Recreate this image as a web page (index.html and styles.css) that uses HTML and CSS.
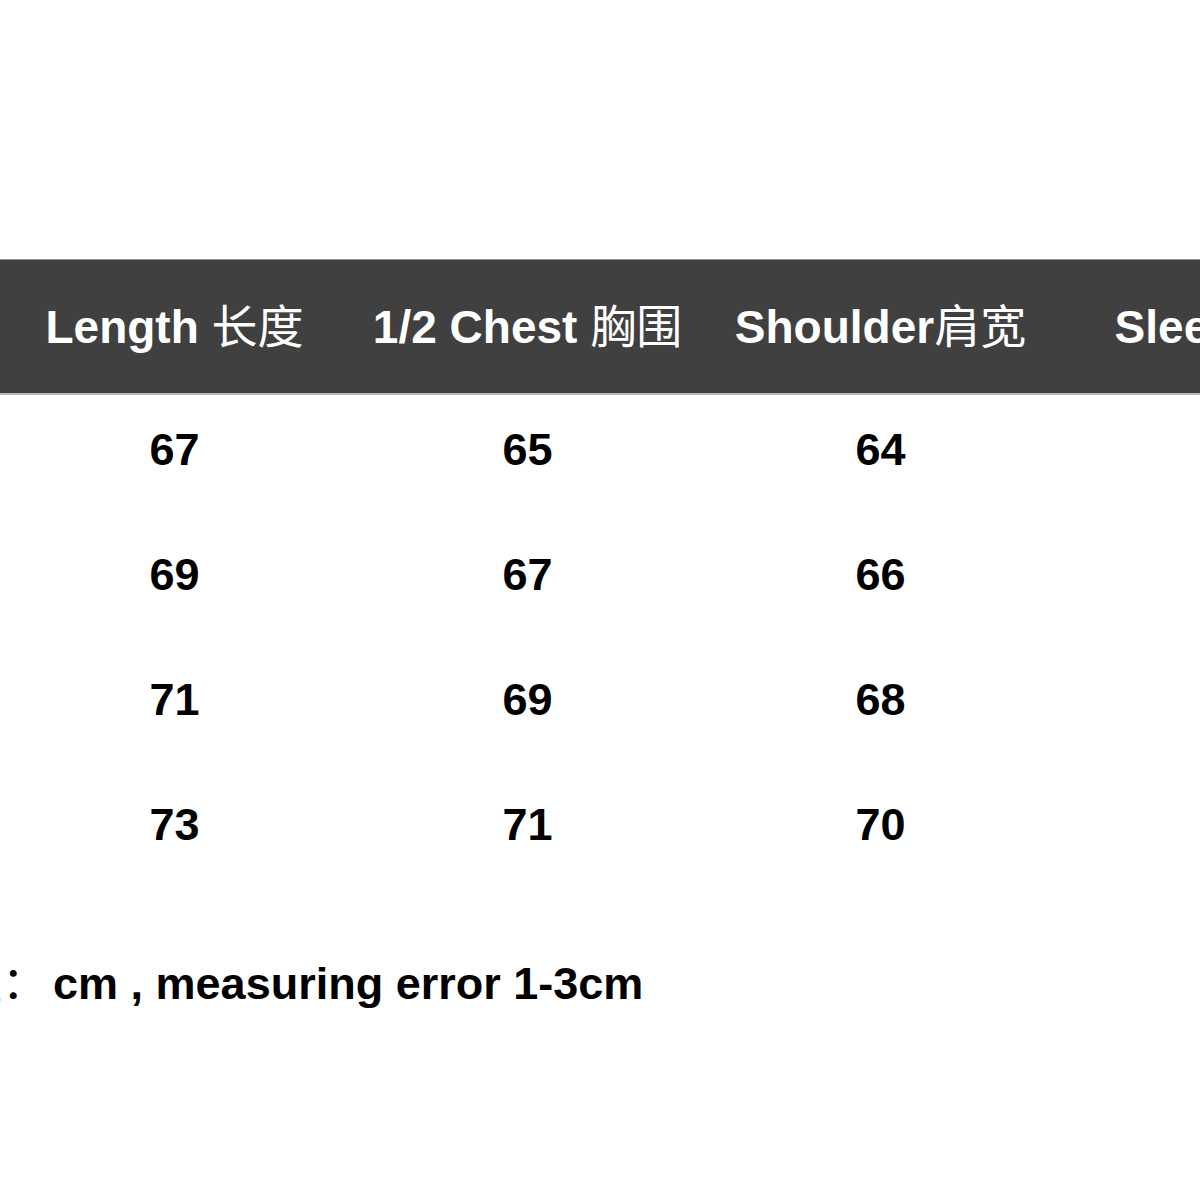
FILE: index.html
```html
<!DOCTYPE html>
<html lang="zh">
<head>
<meta charset="utf-8">
<title>Size Chart</title>
<link rel="stylesheet" href="styles.css">
</head>
<body>
<div class="page">
  <div class="top-space"></div>
  <div class="size-table">
    <div class="head-row">
      <div class="cell">Length <span class="cjk">长度</span></div>
      <div class="cell">1/2 Chest <span class="cjk">胸围</span></div>
      <div class="cell">Shoulder<span class="cjk">肩宽</span></div>
      <div class="cell">Sleeve<span class="cjk">袖长</span></div>
    </div>
    <div class="row">
      <div class="cell">67</div><div class="cell">65</div><div class="cell">64</div><div class="cell"></div>
    </div>
    <div class="row">
      <div class="cell">69</div><div class="cell">67</div><div class="cell">66</div><div class="cell"></div>
    </div>
    <div class="row">
      <div class="cell">71</div><div class="cell">69</div><div class="cell">68</div><div class="cell"></div>
    </div>
    <div class="row">
      <div class="cell">73</div><div class="cell">71</div><div class="cell">70</div><div class="cell"></div>
    </div>
  </div>
  <p class="note"><span class="cjk">单位：</span><span class="note-text">cm , measuring error 1-3cm</span></p>
</div>
</body>
</html>
```
FILE: styles.css
```css
html, body {
  margin: 0;
  padding: 0;
  background: #ffffff;
  overflow: hidden;
}

.page {
  width: 1200px;
  height: 1200px;
  overflow: hidden;
  font-family: "Liberation Sans", Arial, "Noto Sans CJK SC", sans-serif;
  font-weight: bold;
  font-size: 45px;
  color: #000000;
}

.top-space {
  height: 259px;
}

.size-table {
  margin-left: -2px;
  width: 1412px;
}

.head-row {
  display: grid;
  grid-template-columns: repeat(4, 353px);
  height: 136px;
  box-sizing: border-box;
  background: #404040;
  border-top: 1px solid #8c8c8c;
  border-bottom: 2px solid #b8b8b8;
  padding-top: 40px;
  color: #ffffff;
  font-size: 46px;
}

.row {
  display: grid;
  grid-template-columns: repeat(4, 353px);
  height: 125px;
  box-sizing: border-box;
  padding-top: 32px;
}

.cell {
  text-align: center;
  line-height: 46px;
  height: 46px;
  white-space: nowrap;
}

.cjk {
  font-family: "Noto Sans CJK SC", sans-serif;
  font-weight: 400;
  line-height: 46px;
}

.note {
  margin: 62px 0 0 -88px;
  line-height: 46px;
  height: 46px;
  white-space: nowrap;
}

.note-text {
  margin-left: 6px;
}
```
